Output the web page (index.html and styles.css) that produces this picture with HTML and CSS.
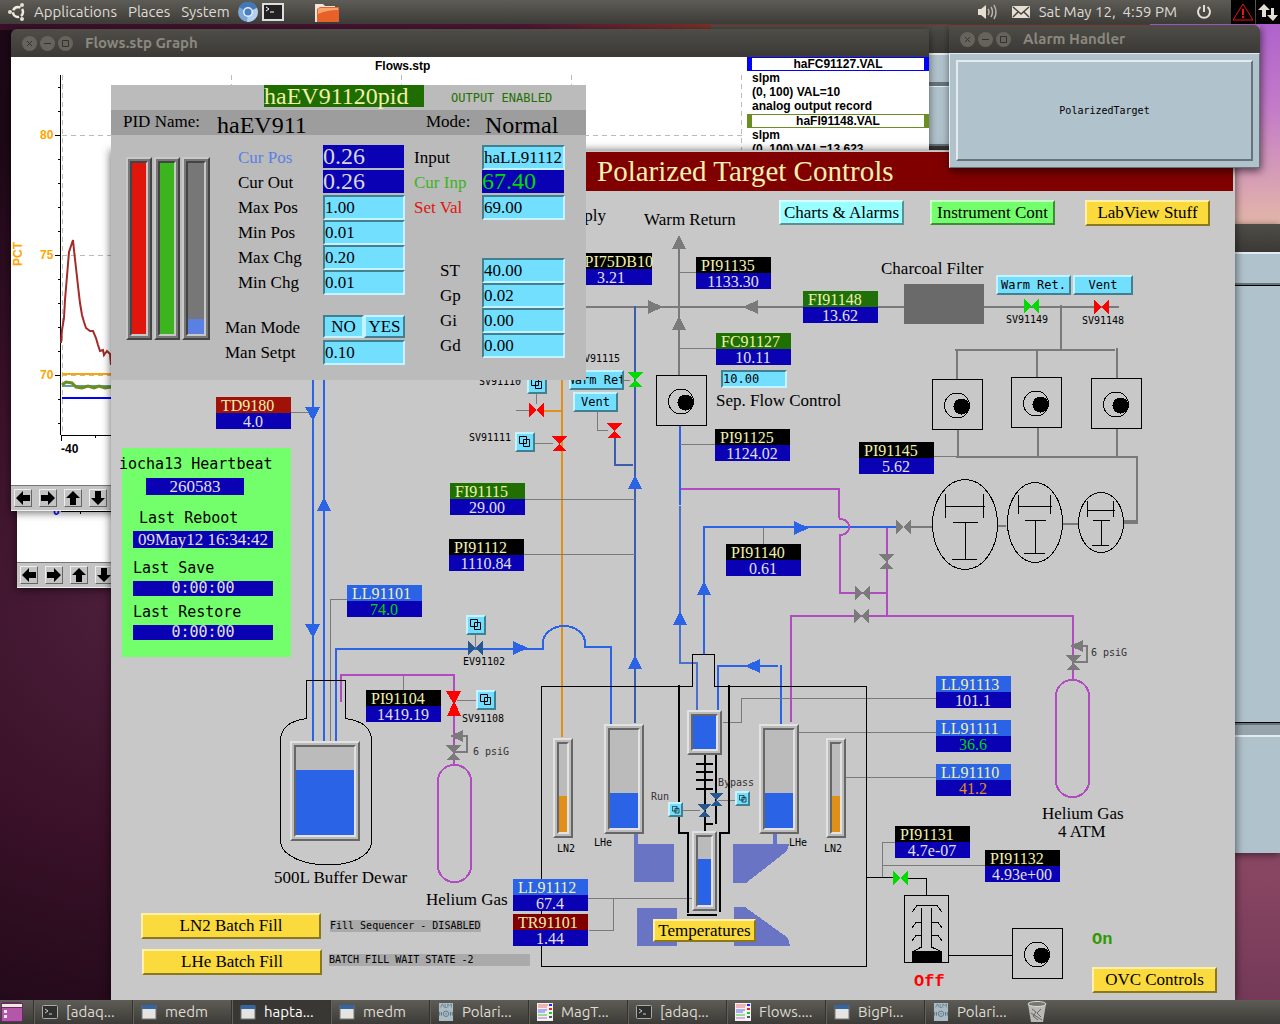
FILE: index.html
```html
<!DOCTYPE html>
<html lang="en">
<head>
    <meta charset="UTF-8">
    <meta name="viewport" content="width=device-width, initial-scale=1.0">
    <title>Polarized Target Controls</title>
    <link rel="stylesheet" href="styles.css">
</head>
<body>
    <!-- shared symbols -->
    <svg class="sprite" aria-hidden="true">
        <symbol id="tag" viewBox="0 0 75 32"><rect width="75" height="16"/><rect y="16" width="75" height="16" fill="#0a00b4"/></symbol>
        <symbol id="valve-h" viewBox="0 0 15 14"><path d="M0 0L8 7L0 14ZM15 0L7 7L15 14Z"/></symbol>
        <symbol id="valve-v" viewBox="0 0 15 15"><path d="M0 0H15L8 8L14 15H1L7 8Z"/></symbol>
        <symbol id="up" viewBox="0 0 14 14"><path d="M0 14H14L7 0Z"/></symbol>
        <symbol id="down" viewBox="0 0 15 14"><path d="M0 0H15L8 14Z"/></symbol>
        <symbol id="right" viewBox="0 0 15 14"><path d="M0 0V14L15 7Z"/></symbol>
        <symbol id="left" viewBox="0 0 15 14"><path d="M15 0V14L0 7Z"/></symbol>
        <symbol id="pump" viewBox="0 0 51 51">
            <rect x=".5" y=".5" width="50" height="50" fill="none" stroke="#000"/>
            <circle cx="25" cy="26.500" r="12.500" fill="none" stroke="#000"/><circle cx="29.500" cy="27.500" r="8"/>
        </symbol>
        <symbol id="regulator" viewBox="0 0 23 30">
            <path d="M17 0V12L4 6Z M0 15H15L8 23L14 30H1L7 23Z"/>
            <path d="M15 6H21V22H8" fill="none" stroke="#7a7a7a" stroke-width="2"/>
        </symbol>
        <symbol id="related" viewBox="0 0 12 12"><path d="M.5 .5H7.500V7.500H.5ZM4.500 3.500H10.500V10.500H4.500Z" fill="none" stroke="#000"/></symbol>
        <symbol id="arrow" viewBox="0 0 14 14"><path d="M0 7L7 0V4H14V10H7V14Z"/></symbol>
        <symbol id="i-window" viewBox="0 0 16 16"><rect x="1" y="2" width="14" height="13" fill="#e4e4e0" stroke="#777"/><rect x="1" y="1" width="14" height="4" fill="#3465a4"/></symbol>
        <symbol id="i-term" viewBox="0 0 16 16"><rect x=".5" y="1.500" width="15" height="13" rx="1" fill="#2e3030" stroke="#aaa"/><path d="M3 5L6 7L3 9M7 10H10" fill="none" stroke="#ccc"/></symbol>
        <symbol id="i-alh" viewBox="0 0 16 20"><rect width="16" height="20" fill="#a9bcc6"/><path d="M2 5L4 1L6 5M7 1V5H9M10 5V1L12 3L14 1V5" fill="none" stroke="#70838c"/><circle cx="8" cy="12" r="3" fill="none" stroke="#61727a"/><path d="M1 10V14M3 10V14M13 10V14M15 10V14M7 12H9" stroke="#61727a"/></symbol>
        <symbol id="i-strip" viewBox="0 0 16 18"><rect width="16" height="18" fill="#f2f2f2"/><path d="M1 2H11M1 4H10" stroke="#e77"/><path d="M1 7H10M1 9H8" stroke="#66e"/><path d="M1 12H10" stroke="#3c3"/><path d="M1 15H10" stroke="#c6c"/><path d="M12 2H15" stroke="#22f" stroke-width="2"/><path d="M12 6H15" stroke="#e22" stroke-width="2"/><path d="M12 10H15" stroke="#2c2" stroke-width="2"/><path d="M12 14H15" stroke="#555" stroke-width="2"/></symbol>
    </svg>

    <header class="topbar">
        <svg class="ubuntu" viewBox="0 0 18 18" width="18" height="18"><circle cx="10" cy="9" r="5" fill="none" stroke="#f0ece0" stroke-width="2.500" stroke-dasharray="8.500 2" stroke-dashoffset="4"/><circle cx="2" cy="9" r="2"/><circle cx="14" cy="2" r="2"/><circle cx="14" cy="16" r="2"/></svg>
        <nav class="menus">
            <a href="#">Applications</a>
            <a href="#">Places</a>
            <a href="#">System</a>
        </nav>
        <svg viewBox="0 0 20 20" width="20" height="20"><circle cx="10" cy="10" r="10" fill="#7ba7d8"/><path d="M10 10L1 5A10 10 0 0 1 19 6Z" fill="#4377b6"/><path d="M10 10L19 6A10 10 0 0 1 9 20Z" fill="#b4d0ee"/><circle cx="10" cy="10" r="5" fill="#e6f0fa"/><circle cx="10" cy="10" r="3.500" fill="#4a7fc0"/></svg>
        <svg viewBox="0 0 22 18" width="22" height="18"><rect x="1" y="1" width="20" height="16" fill="#222" stroke="#ddd" stroke-width="2"/><path d="M4 4L7 6L4 8M8 9H12" fill="none" stroke="#fff"/></svg>
        <svg class="folder" viewBox="0 0 24 20" width="24" height="20"><path d="M0 20V2H8L10 4H20V20Z" fill="#eee6dc"/><path d="M2 20V7L5 5H24V20Z" fill="#e8602a"/><path d="M3 12V7L5 6H23V8Q12 8 3 12Z" fill="#f6a46a"/></svg>
        <div class="tray">
            <svg viewBox="0 0 20 16" width="20" height="16"><path d="M0 5H3L8 1V15L3 11H0Z"/><path d="M10 5Q12 8 10 11M13 3Q16 8 13 13M16 1Q20 8 16 15" fill="none" stroke="#b8b4a8" stroke-width="1.500"/></svg>
            <svg viewBox="0 0 18 12" width="18" height="12"><rect width="18" height="12" rx="1"/><path d="M1 1L9 8L17 1M1 11L6 6M17 11L12 6" fill="none" stroke="#45443f" stroke-width="1.500"/></svg>
            <time>Sat May 12,&nbsp; 4:59 PM</time>
            <svg class="power" viewBox="0 0 16 16" width="16" height="16"><path d="M4.500 3A6 6 0 1 0 11.500 3M8 1V8" fill="none" stroke="#e4dfd2" stroke-width="2"/></svg>
        </div>
        <svg class="cell" viewBox="0 0 24 24" width="24" height="24"><rect width="24" height="24" fill="#000"/><path d="M12 4L22 20H2Z" fill="none" stroke="#e11"/><path d="M12 9V15M12 16V18" stroke="#e11" stroke-width="2"/></svg>
        <svg class="cell" viewBox="0 0 24 24" width="24" height="24"><rect width="24" height="24" fill="#000"/><path d="M2 10L8 4L14 10H10V17H6V10ZM11 15H15V8H18V15H22L17 21Z"/></svg>
    </header>

    <main class="desktop">
        <!-- second strip chart, mostly covered -->
        <section class="window plot plot-back">
            <div class="titlebar"></div>
            <div class="plot-body">
                <svg viewBox="17 118 736 444" width="736" height="444" shape-rendering="crispEdges"><path d="M61 511.500H600M67 509V512M80 512V514" stroke="#000" fill="none"/><text class="axis num-blue" x="53" y="515">0</text></svg>
            </div>
            <div class="plot-tools">
                <button aria-label="Left"><svg viewBox="0 0 14 14"><use href="#arrow"/></svg></button>
                <button aria-label="Right"><svg class="r180" viewBox="0 0 14 14"><use href="#arrow"/></svg></button>
                <button aria-label="Up"><svg class="r90" viewBox="0 0 14 14"><use href="#arrow"/></svg></button>
                <button aria-label="Down"><svg class="r270" viewBox="0 0 14 14"><use href="#arrow"/></svg></button>
            </div>
        </section>

        <section class="window alh-back">
            <div class="titlebar"></div>
            <div class="alh-menu"></div>
            <div class="alh-pane"></div>
        </section>

        <section class="window side">
            <div class="titlebar"></div>
            <div class="side-menu"></div>
            <div class="side-tree"></div>
            <div class="side-sash"></div>
            <div class="side-log"></div>
        </section>

        <section class="window plot plot-front">
            <div class="titlebar">
                <button class="wb" aria-label="Close"><svg viewBox="0 0 15 15"><path d="M5 5L10 10M10 5L5 10"/></svg></button>
                <button class="wb" aria-label="Minimize"><svg viewBox="0 0 15 15"><path d="M4 7.500H11"/></svg></button>
                <button class="wb" aria-label="Maximize"><svg viewBox="0 0 15 15"><path d="M4.500 4.500H10.500V10.500H4.500Z"/></svg></button>
                <h2>Flows.stp Graph</h2>
            </div>
            <div class="plot-body">
                <svg viewBox="11 57 736 428" width="736" height="428">
                    <g fill="none" shape-rendering="crispEdges">
                        <path stroke="#bbb" stroke-dasharray="5 4" d="M62.500 75V435M231.500 75V435M401.500 75V435M571.500 75V435M741.500 75V435M62 135.500H742M62 255.500H742M62 375.500H742"/>
                        <path stroke="#000" d="M60.500 75V435M55 135.500H61M55 255.500H61M55 375.500H61M58 87.500H61M58 111.500H61M58 159.500H61M58 183.500H61M58 207.500H61M58 231.500H61M58 279.500H61M58 303.500H61M58 327.500H61M58 351.500H61M58 399.500H61M58 423.500H61M61 435.500H742M61.500 435V441M95.500 435V438"/>
                    </g>
                    <path d="M61 343L62 330L64 318L65 300L67 276L69 252L71 246L73 240L74 250L76 268L78 286L80 303L82 315L84 322L86 328L90 331L93 331L96 338L98 345L100 351L103 350L104 355L107 351L110 354L111 365" fill="none" stroke="#a52a2a" stroke-width="2"/>
                    <path d="M62 374H300" stroke="#ffa500" stroke-width="2"/>
                    <path d="M62 386H300" stroke="#5f9ea0" stroke-width="2"/>
                    <path d="M62 385L66 382L72 383L76 387L82 388L88 386L94 388L99 386L105 388L111 387" fill="none" stroke="#6b8e23" stroke-width="3"/>
                    <path d="M62 398H300" stroke="#00f" stroke-width="2"/>
                    <text class="axis" x="375" y="70">Flows.stp</text>
                    <g class="axis num-orange">
                        <text x="40" y="139">80</text>
                        <text x="40" y="259">75</text>
                        <text x="40" y="379">70</text>
                        <text transform="translate(22 266) rotate(-90)">PCT</text>
                    </g>
                    <text class="axis" x="61" y="453">-40</text>
                </svg>
                <div class="legend">
                    <h3 class="pen blue">haFC91127.VAL</h3>
                    <p>slpm</p>
                    <p>(0, 100) VAL=10</p>
                    <p>analog output record</p>
                    <h3 class="pen olive">haFI91148.VAL</h3>
                    <p>slpm</p>
                    <p>(0, 100) VAL=13.623</p>
                </div>
            </div>
            <div class="plot-tools">
                <button aria-label="Left"><svg viewBox="0 0 14 14"><use href="#arrow"/></svg></button>
                <button aria-label="Right"><svg class="r180" viewBox="0 0 14 14"><use href="#arrow"/></svg></button>
                <button aria-label="Up"><svg class="r90" viewBox="0 0 14 14"><use href="#arrow"/></svg></button>
                <button aria-label="Down"><svg class="r270" viewBox="0 0 14 14"><use href="#arrow"/></svg></button>
            </div>
        </section>

        <!-- main medm screen -->
        <section class="window target">
            <h1>Polarized Target Controls</h1>
            <svg class="mimic" viewBox="111 192 1124 808" width="1124" height="808" shape-rendering="crispEdges">
                <!-- magnets -->
                <g fill="#6a74c4">
                    <path d="M634 834H638V844H674V882H634Z M637 908H677V946H637Z"/>
                    <path d="M773 834H777V844H789L787 851L746 883H733V844H773Z M734 907H745L788 938L790 946H734Z"/>
                </g>
                <!-- pipes -->
                <g fill="none" stroke-width="2">
                    <g stroke="#7a7a7a">
                        <path d="M586 307H803M679 247V375M878 307H904M984 307H1119M1061 305V350M955 350H1115M957 349V379M1037 350V377M1117 348V378M958 429V457M1038 427V457M1117 428V457M956 457H1137V522M911 527H932M997 526H1006M1063 524H1078"/>
                        <path stroke-width="4" d="M1123 522H1138"/>
                    </g>
                    <g stroke="#e09018"><path d="M562 380V737M544 411H562"/></g>
                    <g stroke="#3c5cb0"><path d="M635 306V723M615 438V465H633"/></g>
                    <g stroke="#2a63e6">
                        <path d="M313 380V741M324 380V741M336 741V649H543V643A21 17 0 0 1 585 643V647H611V724"/>
                        <path d="M680 425V505M704 655V527H896M718 711V666H778M781 665V724"/>
                    </g>
                    <path stroke="#4a70cc" d="M680 506V663H697V711"/>
                    <g stroke="#b04cc0">
                        <path d="M681 489H839V518M839 519Q849 519 849 527Q849 535 839 535M840 534V593H887M887 528V617M791 722V616H1073V680M341 702V675H454V765"/>
                        <rect x="438" y="765" width="33" height="117" rx="16"/>
                        <rect x="1056" y="680" width="33" height="117" rx="16"/>
                    </g>
                </g>
                <!-- signal leads -->
                <path fill="none" stroke="#7a7a7a" d="M283 412.500H313M347 599.500H330.500V741M525 499.500H635M523 554.500H635M403.500 675V690M457 700.500H477M475.500 635V648M680 272.500H696M680 348.500H716M680 444.500H715M763.500 528V544M934 456.500H957M516 410.500H530M536.500 393V404M535 443.500H553M624 380.500H630M597.500 411V430.500H608M588 898.500H692M589 930.500H613.500V899M723 722.500H741.500V698.500H936M799 732.500H942M846 777.500H938M895 842.500H882.500V878M883 865.500H985M718 800.500H735M683 810.500H700"/>
                <!-- vessels -->
                <g fill="none" stroke="#000">
                    <path d="M306.500 718.500V680.500H345.500V718.500M306.500 718.500Q281 722 280.500 740V843C283 856 304 865 328 865C352 865 370 856 371.500 843V740Q371 722 345.500 718.500"/>
                    <path d="M692.500 686.500H541.500V966.500H866.500V686.500H715M692.500 687V654.500H714.500V687"/>
                    <path stroke-width="2" d="M679 685V833H688V913M687 915H717M720 912V833H729V685M705 755V832M716 755V824M705 824H713M696 764H713M696 772H713M696 780H713M696 789H713"/>
                    <path d="M867 877.500H894M908 878.500H926.500V895M904.500 895.500H948.500V962.500H904.500ZM949 955.500H1012"/>
                    <path d="M912 912L917 905.500H937L942 912M921.500 908V947L912 952M931.500 908V947L942 952M921 922.500H916L912 928M931 922.500H938L942 928M921 935.500H916L912 941M931 935.500H938L942 941"/>
                    <ellipse cx="965" cy="524.500" rx="32.500" ry="45"/>
                    <ellipse cx="1035" cy="522.500" rx="27.500" ry="40"/>
                    <ellipse cx="1101" cy="522.500" rx="22.500" ry="30"/>
                    <path d="M945.500 494V518M983.500 494V518M945 506.500H985M953 522.500H978M965.500 522V559M952 559.500H977"/>
                    <path d="M1018.500 495V514M1050.500 495V514M1018 506.500H1052M1025 520.500H1046M1035.500 520V553M1024 553.500H1045"/>
                    <path d="M1087.500 501V517M1113.500 501V517M1087 510.500H1115M1093 520.500H1110M1101.500 520V545M1092 545.500H1109"/>
                </g>
                <rect x="912" y="951" width="30" height="11"/>
                <rect x="904" y="284" width="80" height="40" fill="#6a6a6a"/>
                <use href="#pump" x="656" y="375" width="51" height="51"/>
                <use href="#pump" x="932" y="379" width="51" height="51"/>
                <use href="#pump" x="1011" y="377" width="51" height="51"/>
                <use href="#pump" x="1091" y="378" width="51" height="51"/>
                <use href="#pump" x="1012" y="928" width="51" height="51"/>
                <!-- flow arrows -->
                <g fill="#2a63e6">
                    <use href="#down" x="305" y="407" width="15" height="14"/><use href="#down" x="305" y="624" width="15" height="14"/>
                    <use href="#up" x="317" y="497" width="14" height="14"/><use href="#up" x="628" y="475" width="14" height="14"/>
                    <use href="#up" x="628" y="655" width="14" height="14"/><use href="#up" x="673" y="611" width="14" height="14"/>
                    <use href="#up" x="697" y="581" width="14" height="14"/><use href="#right" x="513" y="641" width="15" height="14"/>
                    <use href="#right" x="794" y="521" width="15" height="14"/><use href="#left" x="745" y="659" width="15" height="14"/>
                </g>
                <g fill="#7a7a7a">
                    <use href="#up" x="672" y="235" width="14" height="14"/><use href="#up" x="672" y="316" width="14" height="14"/>
                    <use href="#right" x="648" y="300" width="15" height="14"/><use href="#left" x="743" y="300" width="15" height="14"/>
                    <use href="#valve-h" x="896" y="520" width="15" height="14"/><use href="#valve-v" x="879" y="554" width="15" height="15"/>
                    <use href="#valve-h" x="855" y="586" width="15" height="14"/><use href="#valve-h" x="854" y="609" width="15" height="14"/>
                    <use href="#regulator" x="446" y="730" width="23" height="30"/><use href="#regulator" x="1066" y="640" width="23" height="30"/>
                </g>
                <!-- valves -->
                <g fill="#f00">
                    <use href="#valve-h" x="529" y="403" width="15" height="14"/><use href="#valve-v" x="552" y="436" width="15" height="15"/>
                    <use href="#valve-v" x="607" y="423" width="15" height="15"/><use href="#valve-h" x="1094" y="300" width="15" height="14"/>
                    <path d="M446 691H461L455 703L461 716H447L453 703Z"/>
                </g>
                <g fill="#00dc00">
                    <use href="#valve-v" x="628" y="372" width="15" height="15"/><use href="#valve-h" x="1024" y="299" width="15" height="14"/>
                    <use href="#valve-h" x="893" y="871" width="15" height="14"/>
                </g>
                <g fill="#24588e">
                    <use href="#valve-h" x="468" y="641" width="15" height="14"/><use href="#valve-v" x="710" y="793" width="13" height="13"/>
                    <use href="#valve-v" x="698" y="804" width="13" height="13"/>
                </g>
                <!-- readouts -->
                <g class="tag" transform="translate(577 253)"><use href="#tag" width="75" height="32"/><text class="end" x="76" y="14">CPI75DB10</text><text class="val" x="34" y="30">3.21</text></g>
                <g class="tag" transform="translate(696 257)"><use href="#tag" width="75" height="32"/><text x="5" y="14">PI91135</text><text class="val" x="37" y="30">1133.30</text></g>
                <g class="tag" transform="translate(803 291)"><use href="#tag" width="75" height="32" fill="#1f7008"/><text x="5" y="14">FI91148</text><text class="val" x="37" y="30">13.62</text></g>
                <g class="tag" transform="translate(716 333)"><use href="#tag" width="75" height="32" fill="#1f7000"/><text x="5" y="14">FC91127</text><text class="val" x="37" y="30">10.11</text></g>
                <g class="tag" transform="translate(715 429)"><use href="#tag" width="75" height="32"/><text x="5" y="14">PI91125</text><text class="val" x="37" y="30">1124.02</text></g>
                <g class="tag" transform="translate(216 397)"><use href="#tag" width="75" height="32" fill="#a01208"/><text x="5" y="14">TD9180</text><text class="val" x="37" y="30">4.0</text></g>
                <g class="tag" transform="translate(859 442)"><use href="#tag" width="75" height="32"/><text x="5" y="14">PI91145</text><text class="val" x="37" y="30">5.62</text></g>
                <g class="tag" transform="translate(450 483)"><use href="#tag" width="75" height="32" fill="#1f7000"/><text x="5" y="14">FI91115</text><text class="val" x="37" y="30">29.00</text></g>
                <g class="tag" transform="translate(449 539)"><use href="#tag" width="75" height="32"/><text x="5" y="14">PI91112</text><text class="val" x="37" y="30">1110.84</text></g>
                <g class="tag" transform="translate(726 544)"><use href="#tag" width="75" height="32"/><text x="5" y="14">PI91140</text><text class="val" x="37" y="30">0.61</text></g>
                <g class="tag" transform="translate(347 585)"><use href="#tag" width="75" height="32" fill="#2a63e6"/><text x="5" y="14">LL91101</text><text class="val low" x="37" y="30">74.0</text></g>
                <g class="tag" transform="translate(366 690)"><use href="#tag" width="75" height="32"/><text x="5" y="14">PI91104</text><text class="val" x="37" y="30">1419.19</text></g>
                <g class="tag" transform="translate(513 879)"><use href="#tag" width="75" height="32" fill="#2a63e6"/><text x="5" y="14">LL91112</text><text class="val" x="37" y="30">67.4</text></g>
                <g class="tag" transform="translate(513 914)"><use href="#tag" width="75" height="32" fill="#800000"/><text x="5" y="14">TR91101</text><text class="val" x="37" y="30">1.44</text></g>
                <g class="tag" transform="translate(936 676)"><use href="#tag" width="75" height="32" fill="#2a63e6"/><text x="5" y="14">LL91113</text><text class="val" x="37" y="30">101.1</text></g>
                <g class="tag" transform="translate(936 720)"><use href="#tag" width="75" height="32" fill="#2a63e6"/><text x="5" y="14">LL91111</text><text class="val low" x="37" y="30">36.6</text></g>
                <g class="tag" transform="translate(936 764)"><use href="#tag" width="75" height="32" fill="#2a63e6"/><text x="5" y="14">LL91110</text><text class="val warn" x="37" y="30">41.2</text></g>
                <g class="tag" transform="translate(895 826)"><use href="#tag" width="75" height="32"/><text x="5" y="14">PI91131</text><text class="val" x="37" y="30">4.7e-07</text></g>
                <g class="tag" transform="translate(985 850)"><use href="#tag" width="75" height="32"/><text x="5" y="14">PI91132</text><text class="val" x="37" y="30">4.93e+00</text></g>
                <!-- captions -->
                <g class="caption">
                    <text class="end" x="606" y="221">Supply</text>
                    <text x="644" y="225">Warm Return</text>
                    <text x="881" y="274">Charcoal Filter</text>
                    <text x="274" y="883">500L Buffer Dewar</text>
                    <text x="426" y="905">Helium Gas</text>
                    <text x="1042" y="819">Helium Gas</text>
                    <text x="1058" y="837">4 ATM</text>
                </g>
                <g class="small">
                    <text x="479" y="385">SV91110</text><text x="469" y="441">SV91111</text><text x="578" y="362">SV91115</text>
                    <text x="1006" y="323">SV91149</text><text x="1082" y="324">SV91148</text>
                    <text x="463" y="665">EV91102</text><text x="462" y="722">SV91108</text>
                    <text x="557" y="852">LN2</text><text x="594" y="846">LHe</text><text x="789" y="846">LHe</text><text x="824" y="852">LN2</text>
                    <g fill="#333"><text x="651" y="800">Run</text><text x="718" y="786">Bypass</text><text x="473" y="755">6 psiG</text><text x="1091" y="656">6 psiG</text></g>
                </g>
                <text class="state" x="1092" y="944" fill="#2f9a00">On</text>
                <text class="state" x="914" y="986" fill="#f00">Off</text>
            </svg>

            <div class="gauge g-dewar"><div class="tube"><i style="height:74%"></i></div></div>
            <div class="gauge g-ln2-a amber"><div class="tube"><i style="height:41%"></i></div></div>
            <div class="gauge g-lhe-a"><div class="tube"><i style="height:36%"></i></div></div>
            <div class="gauge g-sep"><div class="tube"><i style="height:99%"></i></div></div>
            <div class="gauge g-nose"><div class="tube"><i style="height:67%"></i></div></div>
            <div class="gauge g-lhe-b"><div class="tube"><i style="height:36%"></i></div></div>
            <div class="gauge g-ln2-b amber"><div class="tube"><i style="height:41%"></i></div></div>

            <button class="btn b-charts aqua">Charts &amp; Alarms</button>
            <button class="btn b-instr green">Instrument Cont</button>
            <button class="btn b-labview">LabView Stuff</button>
            <button class="btn b-temps">Temperatures</button>
            <button class="btn b-ovc">OVC Controls</button>
            <button class="btn b-ln2">LN2 Batch Fill</button>
            <button class="btn b-lhe">LHe Batch Fill</button>
            <button class="btn sky b-warm-a">Warm Ret</button>
            <button class="btn sky b-vent-a">Vent</button>
            <button class="btn sky b-warm-b">Warm Ret.</button>
            <button class="btn sky b-vent-b">Vent</button>
            <button class="btn sky rel r-sv110" aria-label="SV91110"><svg viewBox="0 0 12 12"><use href="#related"/></svg></button>
            <button class="btn sky rel r-sv111" aria-label="SV91111"><svg viewBox="0 0 12 12"><use href="#related"/></svg></button>
            <button class="btn sky rel r-ev102" aria-label="EV91102"><svg viewBox="0 0 12 12"><use href="#related"/></svg></button>
            <button class="btn sky rel r-sv108" aria-label="SV91108"><svg viewBox="0 0 12 12"><use href="#related"/></svg></button>
            <button class="btn sky rel tiny r-run" aria-label="Run"><svg viewBox="0 0 12 12"><use href="#related"/></svg></button>
            <button class="btn sky rel tiny r-bypass" aria-label="Bypass"><svg viewBox="0 0 12 12"><use href="#related"/></svg></button>
            <div class="sepflow">
                <input id="sepFlow" type="text" value="10.00">
                <label for="sepFlow">Sep. Flow Control</label>
            </div>
            <p class="status st-seq">Fill Sequencer - DISABLED</p>
            <p class="status st-batch">BATCH FILL WAIT STATE -2</p>

            <div class="ioc">
                <h2>iocha13 Heartbeat</h2>
                <output class="beat">260583</output>
                <h3 class="reboot">Last Reboot</h3>
                <output>09May12 16:34:42</output>
                <h3>Last Save</h3>
                <output class="wide">0:00:00</output>
                <h3>Last Restore</h3>
                <output class="wide">0:00:00</output>
            </div>
        </section>

        <section class="window alh">
            <div class="titlebar">
                <button class="wb" aria-label="Close"><svg viewBox="0 0 15 15"><path d="M5 5L10 10M10 5L5 10"/></svg></button>
                <button class="wb" aria-label="Minimize"><svg viewBox="0 0 15 15"><path d="M4 7.500H11"/></svg></button>
                <button class="wb" aria-label="Maximize"><svg viewBox="0 0 15 15"><path d="M4.500 4.500H10.500V10.500H4.500Z"/></svg></button>
                <h2>Alarm Handler</h2>
            </div>
            <div class="alh-body"><button>PolarizedTarget</button></div>
        </section>

        <!-- PID dialog -->
        <section class="window pid">
            <div class="pid-head"><h2>haEV91120pid</h2><span>OUTPUT ENABLED</span></div>
            <div class="pid-name"><span>PID Name:</span><b>haEV911</b><span>Mode:</span><b>Normal</b></div>
            <div class="pid-body">
                <div class="bars">
                    <div class="gauge red"><div class="tube"><i style="height:100%"></i></div></div>
                    <div class="gauge grn"><div class="tube"><i style="height:100%"></i></div></div>
                    <div class="gauge pos"><div class="tube"><i style="height:9%"></i></div></div>
                </div>
                <form class="params p1">
                    <label class="c-blue" for="curPos">Cur Pos</label><output id="curPos">0.26</output>
                    <label for="curOut">Cur Out</label><output id="curOut">0.26</output>
                    <label for="maxPos">Max Pos</label><input id="maxPos" type="text" value="1.00">
                    <label for="minPos">Min Pos</label><input id="minPos" type="text" value="0.01">
                    <label for="maxChg">Max Chg</label><input id="maxChg" type="text" value="0.20">
                    <label for="minChg">Min Chg</label><input id="minChg" type="text" value="0.01">
                    <span class="man gap">Man Mode</span>
                    <span class="toggle gap"><button type="button" class="on">NO</button><button type="button">YES</button></span>
                    <label class="man" for="manSet">Man Setpt</label><input id="manSet" type="text" value="0.10">
                </form>
                <form class="params p2">
                    <label for="inp">Input</label><input id="inp" type="text" value="haLL91112">
                    <label class="c-green" for="curInp">Cur Inp</label><output class="lit" id="curInp">67.40</output>
                    <label class="c-red" for="setVal">Set Val</label><input id="setVal" type="text" value="69.00">
                    <label class="gain first" for="st">ST</label><input class="first" id="st" type="text" value="40.00">
                    <label class="gain" for="gp">Gp</label><input id="gp" type="text" value="0.02">
                    <label class="gain" for="gi">Gi</label><input id="gi" type="text" value="0.00">
                    <label class="gain" for="gd">Gd</label><input id="gd" type="text" value="0.00">
                </form>
            </div>
        </section>
    </main>

    <footer class="taskbar">
        <button class="show" aria-label="Show desktop"><svg viewBox="0 0 22 22" width="22" height="22"><rect x="0" y="1" width="22" height="20" rx="3" fill="#6a2a68"/><rect x="1" y="3" width="20" height="3" fill="#efe9da"/><rect x="1" y="7" width="20" height="13" fill="#b557a8"/><path d="M3 9H6V12H3ZM3 14H6V17H3Z" fill="#f4e9f2"/></svg></button>
        <button class="task"><svg viewBox="0 0 16 16"><use href="#i-term"/></svg>[adaq...</button>
        <button class="task"><svg viewBox="0 0 16 16"><use href="#i-window"/></svg>medm</button>
        <button class="task active"><svg viewBox="0 0 16 16"><use href="#i-window"/></svg>hapta...</button>
        <button class="task"><svg viewBox="0 0 16 16"><use href="#i-window"/></svg>medm</button>
        <button class="task"><svg viewBox="0 0 16 20"><use href="#i-alh"/></svg>Polari...</button>
        <button class="task"><svg viewBox="0 0 16 18"><use href="#i-strip"/></svg>MagT...</button>
        <button class="task"><svg viewBox="0 0 16 16"><use href="#i-term"/></svg>[adaq...</button>
        <button class="task"><svg viewBox="0 0 16 18"><use href="#i-strip"/></svg>Flows....</button>
        <button class="task"><svg viewBox="0 0 16 16"><use href="#i-window"/></svg>BigPi...</button>
        <button class="task"><svg viewBox="0 0 16 20"><use href="#i-alh"/></svg>Polari...</button>
        <svg class="trash" viewBox="0 0 20 22" width="20" height="22"><path d="M1 3H19L16 21H4Z" fill="#b9b9b5"/><ellipse cx="10" cy="3" rx="9" ry="2.500" fill="#77776f" stroke="#ddd"/><path d="M5 8L9 11L6 15L11 19M14 8L10 12L14 16M4 12L15 19" fill="none" stroke="#666"/></svg>
    </footer>
</body>
</html>
```
FILE: styles.css
```css
* {
    box-sizing: border-box;
}

body {
    margin: 0;
    min-height: 100vh;
    position: relative;
    overflow: hidden;
    display: flex;
    flex-direction: column;
    font-family: "Liberation Serif", "Times New Roman", serif;
    font-size: 17px;
    line-height: 20px;
    color: #000;
    background:
        linear-gradient(to bottom, #b062cc 24px, #c47cc8 110px, #e2b4aa 220px, #8c4864 850px, #743a58 1000px) right / 130px 100% no-repeat,
        linear-gradient(to right, #3a1028, #4a1535 40%, #7a3328 56%) top / 100% 30px no-repeat,
        radial-gradient(circle at 140px 600px, #4d1f3c, #3a1128 240px, #1c0816 480px);
}

h1, h2, h3, p {
    margin: 0;
    font-weight: normal;
    font-size: inherit;
}

button, input {
    font: inherit;
    color: inherit;
    padding: 0;
    margin: 0;
    border-radius: 0;
    min-width: 0;
}

.sprite {
    position: absolute;
    width: 0;
    height: 0;
}

/* panels */
.topbar, .taskbar {
    display: flex;
    align-items: center;
    height: 24px;
    flex: none;
    background: linear-gradient(#5d5c56, #3c3b37);
    color: #dfdbd2;
    font-family: Ubuntu, "Noto Sans", sans-serif;
    font-size: 15px;
    z-index: 10;
}

.topbar {
    padding-left: 8px;
}

.topbar svg {
    fill: #e4dfd2;
    flex: none;
}

.ubuntu {
    margin-right: 8px;
}

.menus {
    display: flex;
    gap: 11px;
    margin-right: 8px;
}

.menus a {
    color: inherit;
    text-decoration: none;
}

.topbar svg + svg {
    margin-left: 4px;
}

.topbar .folder {
    margin-left: 31px;
}

.tray {
    display: flex;
    align-items: center;
    gap: 14px;
    margin-left: auto;
    margin-right: 19px;
}

.topbar .tray svg + svg, .topbar .cell {
    margin-left: 0;
}

.topbar .cell + .cell {
    margin-left: 1px;
}

.tray time {
    margin-left: -5px;
}

.tray .power {
    margin-left: 5px;
}

.desktop {
    flex: 1;
}

.taskbar button {
    border: 0;
    background: none;
}

.taskbar .show {
    width: 33px;
    height: 24px;
    display: flex;
    padding-left: 1px;
    align-items: center;
}

.taskbar .task {
    display: flex;
    align-items: center;
    gap: 8px;
    width: 99px;
    height: 24px;
    padding-left: 8px;
    border-left: 1px solid #33322e;
    box-shadow: inset 1px 0 #62615b;
}

.taskbar .task.active {
    background: #383733;
    color: #fff;
}

.task svg {
    width: 16px;
    height: 18px;
    flex: none;
}

.trash {
    margin-left: 4px;
}

/* windows */
.window {
    position: absolute;
    display: flex;
    flex-direction: column;
}

.titlebar {
    display: flex;
    align-items: center;
    gap: 3px;
    height: 28px;
    flex: none;
    padding-left: 11px;
    border-radius: 6px 6px 0 0;
    background: linear-gradient(#4e4d48, #3a3935);
    color: #8b887f;
    font-family: Ubuntu, "Noto Sans", sans-serif;
    font-size: 15px;
}

.titlebar h2 {
    font-weight: bold;
    margin-left: 9px;
}

.wb {
    width: 15px;
    height: 15px;
    border: 0;
    border-radius: 50%;
    background: #65635c;
    display: flex;
}

.wb svg {
    width: 15px;
    height: 15px;
    fill: none;
    stroke: #33322e;
}

.plot {
    box-shadow: 0 2px 8px #0008;
}

.plot-front {
    left: 11px;
    top: 29px;
    width: 918px;
}

.plot-back {
    left: 17px;
    top: 90px;
    width: 900px;
}

.plot-body {
    display: flex;
    background: #fff;
}

.plot-body svg {
    display: block;
    flex: none;
}

.axis {
    font: bold 12px "Liberation Sans", Arial, sans-serif;
}

.num-orange {
    fill: #ffa500;
}

.num-blue {
    fill: #00f;
}

.legend {
    flex: 1;
    font: bold 12px/14px "Liberation Sans", Arial, sans-serif;
}

.legend p {
    padding-left: 5px;
    font-weight: bold;
}

.pen {
    font-weight: bold;
    text-align: center;
    border: 1px solid;
    border-width: 1px 5px;
    line-height: 12px;
}

.pen.blue {
    border-color: #00f;
}

.pen.olive {
    border-color: #6b8e23;
    margin-top: 1px;
}

/* swatch colour is on the border only */
.pen.blue, .pen.olive {
    color: #000;
}

.plot-tools {
    display: flex;
    gap: 7px;
    padding: 3px;
    background: #c4c4c4;
    border-top: 1px solid #777;
    border-bottom: 1px solid #eee;
}

.plot-tools button {
    width: 18px;
    height: 18px;
    border: 1px solid;
    border-color: #eee #666 #666 #eee;
    background: #c4c4c4;
    display: flex;
    align-items: center;
    justify-content: center;
}

.plot-tools svg {
    width: 14px;
    height: 14px;
}

.r90 {
    transform: rotate(90deg);
}

.r180 {
    transform: rotate(180deg);
}

.r270 {
    transform: rotate(270deg);
}

/* alarm handler */
.alh-back {
    left: 711px;
    top: 25px;
    width: 380px;
    border-bottom: 4px solid #3c3b37;
}

.alh-back .titlebar {
    border-radius: 0;
}

.alh-menu {
    height: 33px;
    background: #b0c2cb;
    border-top: 2px solid #e4ebee;
    border-bottom: 4px solid #66737a;
}

.alh-pane {
    height: 60px;
    background: #b0c2cb;
    border-top: 1px solid #e4ebee;
    border-bottom: 2px solid #66737a;
}

.alh {
    left: 949px;
    top: 25px;
    width: 311px;
    box-shadow: 1px 3px 8px #0009;
}

.alh-body {
    display: flex;
    height: 115px;
    padding: 6px;
    background: #b0c2cb;
    border: 1px solid;
    border-color: #e4ebee #66737a #66737a #e4ebee;
}

.alh-body button {
    flex: 1;
    font: 10px "DejaVu Sans Mono", monospace;
    background: #b0c2cb;
    border: 2px solid;
    border-color: #e4ebee #66737a #66737a #e4ebee;
}

.side {
    left: 1100px;
    right: 0;
    top: 224px;
    box-shadow: 0 2px 8px #0008;
}

.side .titlebar {
    border-radius: 0;
}

.side-menu {
    height: 33px;
    background: #b0c2cb;
    border-top: 2px solid #e4ebee;
    border-bottom: 2px solid #66737a;
}

.side-tree {
    height: 438px;
    background: #b0c2cb;
    border: solid #000;
    border-width: 1px 0;
}

.side-sash {
    height: 12px;
    background: #98a5ad;
    border-top: 2px solid #66737a;
}

.side-log {
    height: 118px;
    background: #b0c2cb;
    border-top: 2px solid #e4ebee;
}

/* medm main screen */
.target {
    left: 111px;
    top: 151px;
    width: 1124px;
    background: #c8c8c8;
    box-shadow: 0 -1px #bbb, 0 0 8px 1px #0008;
}

.target h1 {
    margin: 1px 2px;
    height: 39px;
    padding-left: 484px;
    background: #800000;
    color: #f3f0b0;
    font-size: 29px;
    line-height: 39px;
}

.mimic {
    display: block;
    flex: none;
}

.mimic text {
    white-space: pre;
}

.tag text {
    fill: #f0f0b0;
    font-size: 16px;
}

.tag .val {
    fill: #e0e0e0;
    text-anchor: middle;
}

.tag .low {
    fill: #00d800;
}

.tag .warn {
    fill: #e09018;
}

.mimic .end {
    text-anchor: end;
}

.small {
    font: 10px "DejaVu Sans Mono", monospace;
}

.state {
    font: bold 17px "Liberation Mono", monospace;
}

.gauge {
    display: flex;
    padding: 2px;
    background: #bbb;
    border: 2px solid;
    border-color: #e2e2e2 #666 #666 #e2e2e2;
}

.target .gauge {
    position: absolute;
}

.tube {
    flex: 1;
    display: flex;
    align-items: flex-end;
    border: 2px solid;
    border-color: #666 #e2e2e2 #e2e2e2 #666;
}

.tube i {
    flex: 1;
    background: #2a63e6;
}

.amber .tube i {
    background: #e09018;
}

.g-dewar { left: 179px; top: 590px; width: 70px; height: 100px; }
.g-ln2-a { left: 442px; top: 587px; width: 20px; height: 100px; }
.g-lhe-a { left: 493px; top: 573px; width: 40px; height: 110px; }
.g-sep { left: 576px; top: 559px; width: 35px; height: 45px; }
.g-nose { left: 581px; top: 680px; width: 25px; height: 80px; }
.g-lhe-b { left: 648px; top: 573px; width: 40px; height: 110px; }
.g-ln2-b { left: 715px; top: 587px; width: 20px; height: 100px; }

.btn {
    position: absolute;
    height: 26px;
    white-space: nowrap;
    overflow: hidden;
    background: #fada3c;
    border: 2px solid;
    border-color: #fdf0a8 #8a7820 #8a7820 #fdf0a8;
    line-height: 20px;
    display: flex;
    align-items: center;
    justify-content: center;
}

.aqua {
    background: #99ffff;
    border-color: #d8ffff #5a9090 #5a9090 #d8ffff;
}

.green {
    background: #73ff6b;
    border-color: #c8ffc4 #3f8a3b #3f8a3b #c8ffc4;
}

.sky {
    height: 20px;
    background: #73dfff;
    border-color: #c5f3ff #43808f #43808f #c5f3ff;
    font: 12px "DejaVu Sans Mono", monospace;
}

.rel {
    width: 20px;
}

.rel svg {
    width: 12px;
    height: 12px;
    flex: none;
}

.tiny {
    width: 15px;
    height: 15px;
}

.tiny svg {
    width: 8px;
    height: 8px;
}

.b-charts { left: 668px; top: 49px; width: 125px; height: 25px; }
.b-instr { left: 819px; top: 49px; width: 125px; height: 25px; }
.b-labview { left: 974px; top: 49px; width: 125px; }
.b-temps { left: 542px; top: 768px; width: 103px; height: 23px; }
.b-ovc { left: 981px; top: 816px; width: 125px; }
.b-ln2 { left: 30px; top: 762px; width: 180px; }
.b-lhe { left: 31px; top: 798px; width: 180px; }
.b-warm-a { left: 458px; top: 219px; width: 55px; }
.b-vent-a { left: 462px; top: 241px; width: 45px; }
.b-warm-b { left: 885px; top: 124px; width: 75px; }
.b-vent-b { left: 962px; top: 124px; width: 60px; }
.r-sv110 { left: 416px; top: 223px; }
.r-sv111 { left: 404px; top: 281px; }
.r-ev102 { left: 355px; top: 464px; }
.r-sv108 { left: 365px; top: 539px; }
.r-run { left: 557px; top: 651px; }
.r-bypass { left: 624px; top: 640px; }

input {
    width: 100%;
    height: 25px;
    background: #73dfff;
    border: 2px solid;
    border-color: #43808f #c5f3ff #c5f3ff #43808f;
}

.sepflow {
    position: absolute;
    left: 605px;
    top: 219px;
    display: flex;
    flex-direction: column;
    gap: 3px;
}

.sepflow input {
    width: 66px;
    height: 18px;
    margin-left: 5px;
    font: 12px "DejaVu Sans Mono", monospace;
}

.status {
    position: absolute;
    background: #aaa;
    font: 10px/12px "DejaVu Sans Mono", monospace;
}

.st-seq { left: 219px; top: 769px; }
.st-batch { left: 218px; top: 803px; width: 201px; }

/* ioc heartbeat panel */
.ioc {
    position: absolute;
    left: 11px;
    top: 297px;
    width: 169px;
    padding: 7px 18px 11px 11px;
    display: flex;
    flex-direction: column;
    background: #73ff6b;
    font: 15px/18px "DejaVu Sans Mono", monospace;
    white-space: nowrap;
}

.ioc h2 {
    margin: 0 0 5px -14px;
}

.ioc h3 {
    height: 23px;
    padding-top: 1px;
}

.ioc .reboot {
    padding-left: 6px;
}

.ioc output {
    height: 17px;
    background: #0a00b4;
    color: #e0e0e0;
    text-align: center;
    line-height: 17px;
    margin-bottom: 10px;
    font-family: "Liberation Serif", serif;
    font-size: 17px;
}

.ioc .beat {
    width: 98px;
    margin: 0 0 13px 13px;
}

.ioc .wide {
    height: 15px;
    line-height: 15px;
    margin-bottom: 6px;
    font-family: inherit;
    font-size: 15px;
}

/* pid dialog */
.pid {
    left: 111px;
    top: 85px;
    width: 475px;
    background: #bbb;
}

.pid-head {
    display: flex;
    gap: 27px;
    height: 25px;
    padding-left: 153px;
    color: #1f7000;
    font: 12px/26px "DejaVu Sans Mono", monospace;
}

.pid-head h2 {
    width: 160px;
    height: 22px;
    background: #1f6c00;
    color: #f0f0a8;
    font: 24px/22px "Liberation Serif", serif;
}

.pid-name {
    display: grid;
    grid-template-columns: 94px 209px 59px 1fr;
    height: 25px;
    padding-left: 12px;
    line-height: 23px;
    background: #9d9d9d;
}

.pid-name b {
    font-weight: normal;
    font-size: 24px;
    line-height: 30px;
}

.pid-body {
    display: flex;
    padding: 10px 20px 15px 15px;
}

.bars {
    display: flex;
    gap: 2px;
    margin: 12px 15px 0 0;
    height: 183px;
}

.bars .gauge {
    width: 26px;
    background: #777;
    border-color: #c8c8c8 #444 #444 #c8c8c8;
}

.bars .tube {
    background: #777;
    border-color: #444 #c8c8c8 #c8c8c8 #444;
}

.bars .pos {
    width: 28px;
}

.red .tube i {
    background: #e0150c;
}

.grn .tube i {
    background: #3cb41e;
}

.pos .tube i {
    background: #5a80e4;
}

.params {
    display: grid;
    grid-auto-rows: 25px;
    align-content: start;
    line-height: 25px;
}

.p1 {
    grid-template-columns: 98px 82px;
    grid-template-rows: repeat(6, 25px) 45px;
    margin-right: 9px;
}

.p1 label {
    padding-left: 13px;
}

.p1 .man {
    padding-left: 0;
}

.p2 {
    grid-template-columns: 68px 83px;
    grid-template-rows: repeat(3, 25px) 63px;
}

.params output {
    height: 23px;
    margin-right: 1px;
    background: #0a00b4;
    color: #d8d8d8;
    font-size: 24px;
    line-height: 23px;
}

.params .lit {
    color: #00d800;
}

.p1 .gap {
    margin-top: 20px;
}

.p2 .first {
    margin-top: 38px;
}

.p2 .gain {
    padding-left: 26px;
}

.toggle {
    display: flex;
    height: 23px;
}

.toggle button {
    flex: 1;
    line-height: 19px;
    background: #73dfff;
    border: 2px solid;
    border-color: #c5f3ff #43808f #43808f #c5f3ff;
}

.toggle .on {
    border-color: #43808f #c5f3ff #c5f3ff #43808f;
}

.c-blue {
    color: #5a80e4;
}

.c-green {
    color: #3cb41e;
}

.c-red {
    color: #e0150c;
}
```
